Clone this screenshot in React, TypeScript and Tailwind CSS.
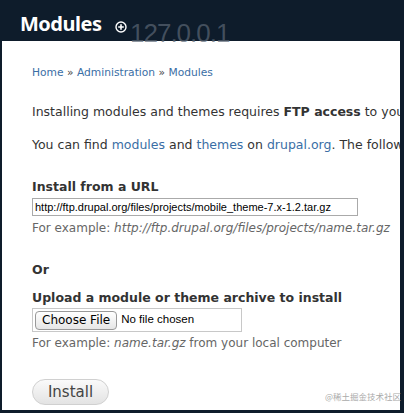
export default function App() {
  return (
    <div className="relative h-[413px] w-[404px] overflow-hidden bg-[#0e1c2b] font-['DejaVu_Sans',sans-serif]">
      <div className="relative h-[41px]">
        <h1 className="absolute left-[20px] top-[12px] font-['Noto_Sans',sans-serif] text-[20px] font-bold leading-[24px] tracking-[-0.5px] text-white">Modules</h1>
        <svg className="absolute left-[115px] top-[21px]" width="12" height="12" viewBox="0 0 12 12">
          <circle cx="6" cy="6" r="5" fill="none" stroke="white" strokeWidth="1.4" />
          <path d="M6 3.2v5.6M3.2 6h5.6" stroke="white" strokeWidth="1.6" />
        </svg>
        <span className="absolute left-[130px] top-[20px] font-['Liberation_Sans',sans-serif] text-[26px] leading-[26px] tracking-[-1px] text-[#5c6775]/70">127.0.0.1</span>
      </div>
      <div className="ml-[2px] mr-[4px] h-[369px] overflow-hidden bg-white pl-[30px] pt-[24px] text-[12.5px] leading-[16px] text-[#333]">
        <div className="whitespace-nowrap text-[10.7px] text-[#3a6ea5]">
          Home <span className="text-[#444]">»</span> Administration <span className="text-[#444]">»</span> Modules
        </div>
        <p className="mt-[23px] whitespace-nowrap">
          Installing modules and themes requires <strong>FTP access</strong> to your server.
        </p>
        <p className="mt-[17px] whitespace-nowrap">
          You can find <span className="text-[#3a6ea5]">modules</span> and <span className="text-[#3a6ea5]">themes</span> on <span className="text-[#3a6ea5]">drupal.org</span>. The following file extensions are supported.
        </p>
        <div className="mt-[26px] font-bold">Install from a URL</div>
        <div className="mt-[3px] h-[18px] w-[326px] border border-[#aaa] px-[2px] font-['Liberation_Sans',sans-serif] text-[11px] leading-[16px] text-black">
          http://ftp.drupal.org/files/projects/mobile_theme-7.x-1.2.tar.gz
        </div>
        <div className="mt-[4px] whitespace-nowrap text-[12px] text-[#666]">
          For example: <em>http://ftp.drupal.org/files/projects/name.tar.gz</em>
        </div>
        <div className="mt-[26px] font-bold">Or</div>
        <div className="mt-[12px] font-bold">Upload a module or theme archive to install</div>
        <div className="mt-[2px] flex h-[24px] w-[210px] items-center border border-[#c8c8c8] pl-[2px]">
          <span className="flex h-[19px] items-center rounded-[4px] border border-[#999] bg-gradient-to-b from-white to-[#e6e6e6] px-[6px] text-[12px] text-black">
            Choose File
          </span>
          <span className="mb-[3px] ml-[4px] font-['Liberation_Sans',sans-serif] text-[11.5px] text-black">No file chosen</span>
        </div>
        <div className="mt-[3px] whitespace-nowrap text-[12px] text-[#666]">
          For example: <em>name.tar.gz</em> from your local computer
        </div>
        <button className="mt-[28px] h-[26px] w-[77px] rounded-full border border-[#d0d0d0] bg-gradient-to-b from-[#fafafa] to-[#e3e3e3] text-[15px] leading-[24px] text-[#444]">
          Install
        </button>
      </div>
      <div className="absolute left-[325px] top-[390px] whitespace-nowrap font-['Noto_Sans_CJK_SC',sans-serif] text-[8.5px] text-[#aaa]">@稀土掘金技术社区</div>
    </div>
  );
}
